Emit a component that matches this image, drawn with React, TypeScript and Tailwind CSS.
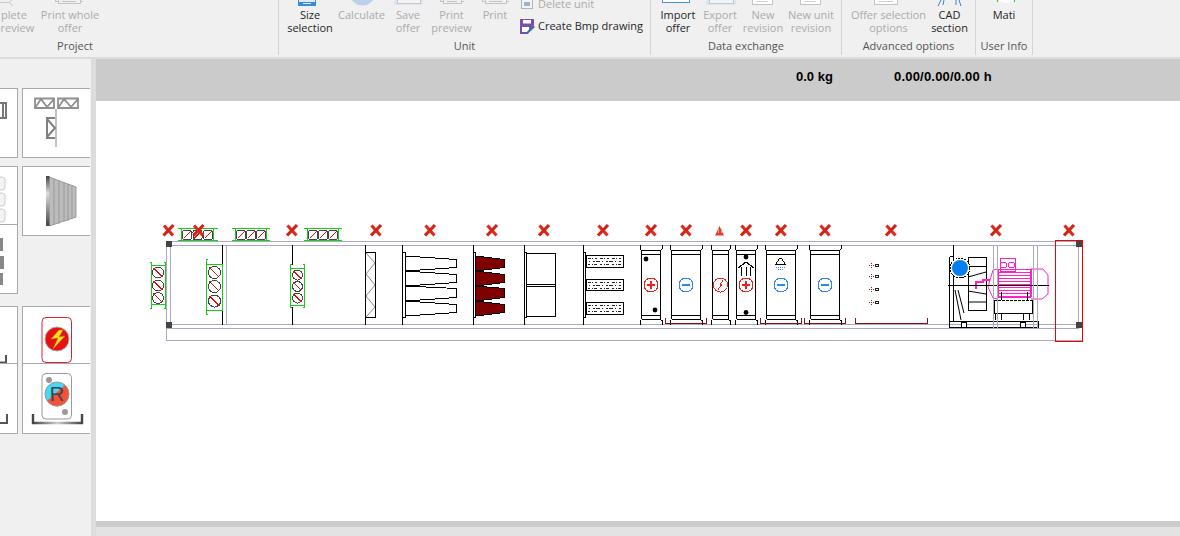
import React from "react";

function X({ x, y = 230.5 }: { x: number; y?: number }) {
  return (
    <g shapeRendering="auto">
      <path d={`M${x - 4.5} ${y - 5}L${x + 4.5} ${y + 5}`} stroke="#e22a1c" strokeWidth="3.2" />
      <path d={`M${x + 5} ${y - 5.5}L${x - 5} ${y + 5}`} stroke="#cf2418" strokeWidth="3.2" />
    </g>
  );
}

function SideDamper({ x, cys, r }: { x: number; cys: number[]; r: number }) {
  return (
    <g>
      {cys.map((cy) => (
        <g key={cy}>
          <circle cx={x} cy={cy} r={r} fill="#fff" stroke="#444" />
          <path d={`M${x - r + 1} ${cy - r + 1}L${x + r - 1} ${cy + r - 1}`} stroke="#e01010" />
        </g>
      ))}
    </g>
  );
}

function TopDamper({ l, r, vl, vr, cxs }: { l: number; r: number; vl: number; vr: number; cxs: number[] }) {
  return (
    <g>
      <path d={`M${l} 228.5H${r}M${l} 240.5H${r}M${vl}.5 228V241M${vr}.5 228V241`} fill="none" stroke="#18cc18" />
      {cxs.map((cx) => (
        <g key={cx}>
          <rect x={cx - 4.5} y="230.5" width="9" height="9" rx="2" fill="#fff" stroke="#444" />
          <path d={`M${cx - 3.5} 238.5L${cx + 3.5} 231.5`} stroke="#e01010" />
        </g>
      ))}
    </g>
  );
}

function Coil({ l, r, kind }: { l: number; r: number; kind: "plus" | "minus" | "flash" }) {
  const cx = (l + r) / 2;
  const color = kind === "minus" ? "#2f86f5" : "#ee2020";
  return (
    <g fill="none" stroke="#000">
      <path d={`M${l - 1.5} 245V249L${l} 250.5H${r}L${r + 1.5} 249V245`} />
      <path d={`M${l} 250V319M${r} 250V319M${l} 254.5H${r}M${l} 315.5H${r}M${l} 319.5H${r}`} />
      <path d={`M${l - 1.5} 325V320.5L${l} 319.5M${r + 1.5} 325V320.5L${r} 319.5`} />
      <circle cx={cx} cy={285} r="7" fill="#fff" stroke={color} />
      {kind !== "flash" && <path d={`M${cx - 4} 285H${cx + 4}`} stroke={color} strokeWidth="2" />}
      {kind === "plus" && <path d={`M${cx} 281V289`} stroke={color} strokeWidth="2" />}
      {kind === "flash" && <path d={`M${cx + 2.5} 280.5L${cx} 284H${cx + 1.5}L${cx - 2.5} 289.5`} stroke={color} />}
    </g>
  );
}

function Drain({ l, r }: { l: number; r: number }) {
  return <path d={`M${l}.5 318V323.5H${r}.5V318`} fill="none" stroke="#8b1010" />;
}

function Dots({ y }: { y: number }) {
  return (
    <g>
      <path d={`M869 ${y}.5H874M871.5 ${y - 2}V${y + 3}`} stroke="#8b2020" strokeDasharray="1 1" />
      <circle cx="877" cy={y + 0.5} r="1.5" fill="none" stroke="#222" />
    </g>
  );
}

function Carbon({ y, h }: { y: number; h: number }) {
  return (
    <g>
      <rect x="586.5" y={y + 0.5} width="37" height={h} fill="#fff" stroke="#000" />
      <path d={`M588 ${y + 3}.5H622`} stroke="#222" strokeDasharray="3 1 1 2 2 3" />
      <path d={`M589 ${y + 6}.5H622`} stroke="#222" strokeDasharray="1 3 2 1 4 2" />
      <path d={`M588 ${y + 9}.5H622`} stroke="#222" strokeDasharray="2 2 1 1 3 3" />
    </g>
  );
}

function Bolt({ x, y }: { x: number; y: number }) {
  return <circle cx={x} cy={y} r="2.4" fill="#000" shapeRendering="auto" />;
}

function Drawing() {
  const gl = "#a9a9c0";
  const xs = [168.5, 198.5, 292, 376, 430, 492, 544, 603, 651, 686, 746, 781, 825, 891, 996, 1069];
  return (
    <svg viewBox="96 101 1084 420" className="block h-[420px] w-[1084px]" shapeRendering="crispEdges">
      {/* casing */}
      <path d="M166 241.5H1079M170 245.5H1079M170 324.5H1079M166 328.5H1079M166 340.5H1082M166.5 241V341M170.5 245V325M1078.5 245V325" fill="none" stroke={gl} />

      {/* partitions */}
      <path d="M222.5 245V325M292.5 245V265M292.5 307V325" fill="none" stroke="#000" />
      <path d="M226.5 245V325" stroke={gl} />

      {/* side dampers */}
      <path d="M151.5 262V308.5M165.5 262V308.5M150 262.5H152M150 308.5H152M164 262.5H166M164 308.5H166M151 265.5H166M151 304.5H166" fill="none" stroke="#18cc18" />
      <SideDamper x={158} cys={[272.5, 285.5, 298]} r={5.5} />
      <path d="M206.5 259V314.5M222.5 264V310.5M206.5 264.5H222M206.5 310.5H222M206.5 259.5H208M206.5 314.5H208" fill="none" stroke="#18cc18" />
      <SideDamper x={214.5} cys={[272.5, 286.5, 301]} r={6} />
      <path d="M290.5 264V307.5M304.5 264V307.5M290.5 268.5H304M290.5 305.5H304M290.5 264.5H292M303 264.5H305M290.5 307.5H292M303 307.5H305" fill="none" stroke="#18cc18" />
      <SideDamper x={297.5} cys={[275, 286.5, 298]} r={5} />

      {/* top dampers */}
      <TopDamper l={178} r={218} vl={181} vr={213} cxs={[187, 197.5, 208]} />
      <TopDamper l={232} r={270} vl={235} vr={266} cxs={[241, 251, 261]} />
      <TopDamper l={304} r={342} vl={307} vr={338} cxs={[313, 323, 333]} />

      {/* panel filter */}
      <path d="M365.5 245V325M365.5 252.5H375.5V317.5H365.5" fill="none" stroke="#000" />
      <path d="M366 253L375 263L366 274L375 285L366 296L375 307L366 317" fill="none" stroke="#888" shapeRendering="auto" />

      {/* bag filter */}
      <path d="M402.5 245V325M402.5 252.5H405.5V317.5H402.5" fill="none" stroke="#000" />
      <g fill="#fff" stroke="#000">
        <path d="M405.5 256L456.5 259.5V267.5L405.5 271Z" />
        <path d="M405.5 271L456.5 274.5V282.5L405.5 286Z" />
        <path d="M405.5 286L456.5 288.5V297.5L405.5 301Z" />
        <path d="M405.5 301L456.5 304.5V312.5L405.5 316Z" />
      </g>
      <path d="M473.5 245V325M473.5 252.5H475.5V317.5H473.5" fill="none" stroke="#000" />
      <g fill="#7e0000" stroke="#000">
        <path d="M475.5 256L504.5 259.5V267.5L475.5 271Z" />
        <path d="M475.5 271L504.5 274.5V282.5L475.5 286Z" />
        <path d="M475.5 286L504.5 288.5V297.5L475.5 301Z" />
        <path d="M475.5 301L504.5 304.5V312.5L475.5 316Z" />
      </g>

      {/* compact filter */}
      <g fill="none" stroke="#000">
        <path d="M524.5 245V325M524.5 252.5H526.5V317.5H524.5" />
        <rect x="526.5" y="253.5" width="29" height="63" />
        <path d="M527 284.5H555M527 286.5H555" />
      </g>

      {/* carbon filter */}
      <path d="M583.5 245V325M583.5 252.5H585.5V317.5H583.5" fill="none" stroke="#000" />
      <Carbon y={255} h={12} />
      <Carbon y={279} h={11} />
      <Carbon y={302} h={12} />

      {/* coils */}
      <Coil l={641.5} r={660.5} kind="plus" />
      <Bolt x={646} y={259} />
      <Bolt x={655} y={310} />
      <Coil l={671.5} r={700.5} kind="minus" />
      <Drain l={665} r={706} />
      <Coil l={712.5} r={728.5} kind="flash" />
      <Coil l={736.5} r={755.5} kind="plus" />
      <Bolt x={746} y={257} />
      <Bolt x={746} y={312.5} />
      <path d="M738 268L746 262L754 268" fill="none" stroke="#000" strokeWidth="1.2" />
      <path d="M741.5 267V276M746.5 267V276M750.5 267V276" fill="none" stroke="#000" strokeWidth="1.4" />
      <Coil l={766.5} r={795.5} kind="minus" />
      <path d="M779.5 258.5H781.5L785.5 264.5H775.5Z" fill="#fff" stroke="#000" />
      <path d="M776 267.5H786" stroke="#2f86f5" strokeDasharray="1 1" />
      <path d="M778 269.5H784" stroke="#2f86f5" strokeDasharray="1 1" />
      <Drain l={760} r={801} />
      <Coil l={810.5} r={839.5} kind="minus" />
      <Drain l={804} r={845} />

      {/* eliminator */}
      <Dots y={265} />
      <Dots y={276} />
      <Dots y={289} />
      <Dots y={302} />
      <Drain l={855} r={927} />

      {/* fan */}
      <g fill="none" stroke="#000">
        <path d="M949.5 257V327.5H1038.5V321H949.5M949.5 256.5H953M953.5 245V321" />
        <rect x="968.5" y="257.5" width="18" height="53" fill="#fff" />
        <path d="M968 266.5H986M968 277L986 272M968 291L986 294M968 302L986 302M955 290L961 320M958 290L964 313" shapeRendering="auto" />
        <rect x="961.5" y="322.5" width="5" height="5" fill="#fff" />
        <rect x="1020.5" y="322.5" width="5" height="5" fill="#fff" />
      </g>
      <circle cx="960" cy="268" r="10" fill="#fff" stroke="#000" strokeDasharray="2 1" />
      <circle cx="960" cy="268" r="8" fill="#0a7df0" shapeRendering="auto" />

      {/* motor */}
      <g fill="none" stroke="#ff20c8">
        <path d="M1031 269H1043L1048 275V294L1042 299H1031" shapeRendering="auto" />
        <path d="M998 269L993 270L988 287L993 298L998 299" shapeRendering="auto" />
        <rect x="1000.5" y="258.5" width="15" height="13" />
        <circle cx="1003.5" cy="265" r="3" />
        <circle cx="1011.5" cy="265" r="3" />
        <path d="M998 272.5H1031M998 275.5H1031M998 278.5H1031M998 281.5H1031M998 284.5H1031M998 287.5H1031M998 290.5H1031M998 293.5H1031" />
        <path d="M1031 269V297M998 296.5H1031" strokeWidth="2" />
        <path d="M976 289V282H983V279.5H990" strokeWidth="2" />
        <path d="M998 269H1031M998 269V296" />
      </g>
      <g fill="none" stroke="#000">
        <path d="M948 285.5H1049" />
        <path d="M994 300.5H1032.5" strokeDasharray="3 1" />
        <path d="M994.5 300V313.5H1032.5V300M1001.5 292V300M1027.5 292V300" />
        <path d="M995.5 313V320M1001.5 313V320M1023.5 313V320M1029.5 313V320" />
      </g>
      <path d="M993.5 245V328M997.5 245V328M1033.5 245V328M1037.5 245V328" stroke={gl} fill="none" />

      {/* markers */}
      {xs.map((x) => (
        <X key={x} x={x} />
      ))}
      <path d="M719.5 226L724 235.5H715Z" fill="#e83a2a" shapeRendering="auto" />
      <path d="M718 233V229M721 233V229" stroke="#f8a090" />
      <rect x="166" y="241" width="6" height="6" fill="#444" />
      <rect x="166" y="322" width="6" height="6" fill="#444" />
      <rect x="1076" y="241" width="6" height="6" fill="#444" />
      <rect x="1076" y="322" width="6" height="6" fill="#444" />
      <rect x="1055.5" y="240.5" width="27" height="101" fill="none" stroke="#f00000" />
    </svg>
  );
}

function Btn({ cls, a, b, on = false, icon }: { cls: string; a: string; b?: string; on?: boolean; icon?: React.ReactNode }) {
  return (
    <div className={`relative flex shrink-0 flex-col items-center pt-[8px] text-[11px] leading-[13px] whitespace-nowrap ${on ? "text-[#262626]" : "text-[#ababab]"} ${cls}`}>
      {icon}
      <span>{a}</span>
      <span>{b}</span>
    </div>
  );
}

function Group({ cls, label, children }: { cls: string; label: string; children: React.ReactNode }) {
  return (
    <div className={`flex h-[55px] shrink-0 flex-col border-r border-[#d4d4d4] ${cls}`}>
      <div className="flex h-[38px]">{children}</div>
      <div className="text-center text-[11px] leading-[16px] text-[#555]">{label}</div>
    </div>
  );
}

function Tile({ cls, children }: { cls: string; children?: React.ReactNode }) {
  return <div className={`w-[68px] shrink-0 overflow-hidden border border-[#a9a9a9] bg-white ${cls}`}>{children}</div>;
}

const PaperIcon = ({ left, w }: { left: string; w: number }) => (
  <svg width={w} height="6" viewBox={`0 0 ${w} 6`} className={`absolute top-0 ${left}`} shapeRendering="crispEdges">
    <path d={`M3.5 0V3.5H${w - 3}V0M0 0V1.5H3M${w - 3} 1.5H${w}V0M7 1.5H${w - 7}`} fill="none" stroke="#c4c4c4" />
  </svg>
);

const PagedIcon = ({ left, w }: { left: string; w: number }) => (
  <svg width={w} height="5" viewBox={`0 0 ${w} 5`} className={`absolute top-0 ${left}`} shapeRendering="crispEdges">
    <path d={`M0.5 0V4.5H${w - 0.5}V0`} fill="#fff" stroke="#c4c4c4" />
    <path d={`M5 1.5H${w - 5}`} stroke="#cfcfcf" />
  </svg>
);

const PaleIcon = ({ left, w }: { left: string; w: number }) => (
  <svg width={w} height="6" viewBox={`0 0 ${w} 6`} className={`absolute top-0 ${left}`} shapeRendering="crispEdges">
    <rect x="0" y="-2" width={w} height="7" fill="#dbe6f4" />
    <rect x="3" y="-2" width={w - 6} height="5" fill="#f3f3f3" stroke="#c8c8c8" />
  </svg>
);

export default function App() {
  return (
    <div className="flex h-[536px] w-[1180px] flex-col overflow-hidden bg-[#f0f0f0] font-['Open_Sans','Noto_Sans',sans-serif]">
      {/* ribbon */}
      <div className="flex h-[59px] shrink-0 overflow-hidden border-b-2 border-[#dcdcdc] bg-[#f0f0f0]">
        <div className="flex h-[55px] w-[279px] shrink-0 flex-col overflow-hidden border-r border-[#d4d4d4]">
          <div className="relative flex h-[38px]">
            <div className="absolute left-[-22px]">
              <Btn
                cls="w-[72px]"
                a="plete"
                b="preview"
                icon={
                  <svg width="13" height="6" viewBox="0 0 13 6" className="absolute left-[22px] top-0" shapeRendering="auto">
                    <path d="M0 2.5H9L12 0M9 2.5L13 6" fill="none" stroke="#c8c8c8" />
                  </svg>
                }
              />
            </div>
            <div className="ml-[36px]">
              <Btn cls="w-[68px]" a="Print whole" b="offer" icon={<PaperIcon left="left-[19px]" w={28} />} />
            </div>
          </div>
          <div className="w-[150px] text-center text-[11px] leading-[16px] text-[#555]">Project</div>
        </div>

        <Group cls="w-[372px]" label="Unit">
          <div className="flex w-[241px] pl-[3px]">
            <Btn
              cls="w-[56px]"
              a="Size"
              b="selection"
              on
              icon={
                <svg width="18" height="6" viewBox="0 0 18 6" className="absolute left-[16px] top-0" shapeRendering="crispEdges">
                  <rect x="0" y="0" width="18" height="6" fill="#3f8ad6" />
                  <rect x="1" y="0" width="16" height="2" fill="#dcebf8" />
                  <path d="M5 3.5H13" stroke="#dcebf8" />
                </svg>
              }
            />
            <Btn
              cls="w-[47px]"
              a="Calculate"
              icon={
                <svg width="27" height="6" viewBox="0 0 27 6" className="absolute left-[11px] top-0">
                  <ellipse cx="13.5" cy="-9" rx="13.5" ry="14.5" fill="#bcd0ec" />
                </svg>
              }
            />
            <Btn cls="w-[46px]" a="Save" b="offer" icon={<PaleIcon left="left-[9px]" w={29} />} />
            <Btn cls="w-[41px]" a="Print" b="preview" icon={<PaperIcon left="left-[9px]" w={24} />} />
            <Btn cls="w-[46px]" a="Print" icon={<PaperIcon left="left-[10px]" w={27} />} />
          </div>
          <div className="flex flex-col text-[11px] leading-[16px] whitespace-nowrap">
            <div className="-mt-[4px] flex h-[16px] items-center text-[#ababab]">
              <svg width="12" height="12" viewBox="0 0 12 12" className="ml-[1px] mr-[5px] -mt-[3px]" shapeRendering="crispEdges">
                <rect x="0.5" y="-2" width="11" height="13.5" fill="#f4f4f4" stroke="#b4b4b4" />
                <rect x="3" y="5" width="6" height="4" fill="#9fb2c8" />
              </svg>
              Delete unit
            </div>
            <div className="mt-[6px] flex h-[16px] items-center text-[#262626]">
              <svg width="15" height="15" viewBox="0 0 15 15" className="mr-[3px]">
                <path d="M0 0H14V6L11 9L8 15H0Z" fill="#7b4ea8" />
                <rect x="3" y="1" width="8" height="3.5" fill="#fff" />
                <rect x="2" y="8" width="7" height="5" fill="#fff" />
                <path d="M5 15L13 6L15 8L7.5 15Z" fill="#3b6db0" />
              </svg>
              Create Bmp drawing
            </div>
          </div>
        </Group>

        <Group cls="w-[191px]" label="Data exchange">
          <Btn
            cls="w-[54px]"
            a="Import"
            b="offer"
            on
            icon={
              <svg width="28" height="4" viewBox="0 0 28 4" className="absolute left-[11px] top-0" shapeRendering="crispEdges">
                <path d="M0.5 0V2.5H27.5V0" fill="#fff" stroke="#4a8fdc" />
              </svg>
            }
          />
          <Btn cls="w-[30px]" a="Export" b="offer" icon={<PaleIcon left="left-[1px]" w={30} />} />
          <Btn cls="w-[56px]" a="New" b="revision" icon={<PagedIcon left="left-[17px]" w={21} />} />
          <Btn cls="w-[40px]" a="New unit" b="revision" icon={<PagedIcon left="left-[9px]" w={21} />} />
        </Group>

        <Group cls="w-[134px]" label="Advanced options">
          <Btn cls="w-[93px]" a="Offer selection" b="options" icon={<PagedIcon left="left-[32px]" w={24} />} />
          <Btn
            cls="w-[29px]"
            a="CAD"
            b="section"
            on
            icon={
              <svg width="25" height="6" viewBox="0 0 25 6" className="absolute left-[2px] top-0">
                <path d="M4 0L1 6M7 0L6 5M19 0L19 5M22 0L24 6" fill="none" stroke="#3f7fc8" />
              </svg>
            }
          />
        </Group>

        <Group cls="w-[57px]" label="User Info">
          <Btn
            cls="w-[56px]"
            a="Mati"
            on
            icon={
              <svg width="18" height="3" viewBox="0 0 18 3" className="absolute left-[21px] top-0">
                <ellipse cx="9" cy="-1" rx="7" ry="4" fill="#fff" />
                <rect x="0" y="0" width="1" height="2" fill="#22cc22" />
                <rect x="17" y="0" width="1" height="2" fill="#22cc22" />
              </svg>
            }
          />
        </Group>
      </div>

      <div className="flex min-h-0 flex-1">
        {/* left palette */}
        <div className="flex w-[96px] shrink-0">
          <div className="w-[91px] overflow-hidden bg-[#f0f0f0] pt-[29px]">
            <div className="flex">
              <div className="ml-[-50px] flex flex-col">
                <Tile cls="mb-[8px] h-[70px]">
                  <svg viewBox="-49 89 66 68" className="block h-[68px] w-[66px]">
                    <path d="M0 103H6V118H0M3 103V118" fill="none" stroke="#777" strokeWidth="2" />
                  </svg>
                </Tile>
                <Tile cls="h-[59px]">
                  <svg viewBox="-49 167 66 57" className="block h-[57px] w-[66px]">
                    <rect x="-6" y="177" width="11" height="13" rx="3" fill="#f3f3f3" stroke="#ccc" />
                    <rect x="-6" y="193" width="11" height="13" rx="3" fill="#f3f3f3" stroke="#ccc" />
                    <rect x="-6" y="209" width="11" height="13" rx="3" fill="#f3f3f3" stroke="#ccc" />
                  </svg>
                </Tile>
                <Tile cls="mb-[12px] h-[69px] border-t-0">
                  <svg viewBox="-49 224 66 68" className="block h-[68px] w-[66px]">
                    <path d="M-4 237H3V250H-4ZM-4 255H4V268H-4ZM-4 272H3V284H-4Z" fill="#888" />
                  </svg>
                </Tile>
                <Tile cls="h-[58px]">
                  <svg viewBox="-49 306 66 57" className="block h-[57px] w-[66px]">
                    <path d="M6 354V362M-6 361.5H7" fill="none" stroke="#555" strokeWidth="2" />
                  </svg>
                </Tile>
                <Tile cls="h-[70px] border-t-0">
                  <svg viewBox="-49 363 66 69" className="block h-[69px] w-[66px]">
                    <path d="M7 413V422H-6" fill="none" stroke="#555" strokeWidth="2" />
                  </svg>
                </Tile>
              </div>
              <div className="ml-[4px] flex flex-col">
                <Tile cls="mb-[8px] h-[70px] border-r-0">
                  <svg viewBox="23 89 67 68" className="block h-[68px] w-[67px]">
                    <defs>
                      <linearGradient id="g1" x1="0" x2="1">
                        <stop offset="0" stopColor="#777" />
                        <stop offset="0.5" stopColor="#ddd" />
                        <stop offset="1" stopColor="#777" />
                      </linearGradient>
                    </defs>
                    <path d="M35 98.5H54V108H35ZM58 98.5H78V108H58ZM35 108L41 99L47 107L54 99M58 108L64 99L71 107L78 99" fill="none" stroke="#8f8f8f" strokeWidth="1.8" />
                    <path d="M32 109H81" stroke="url(#g1)" strokeWidth="2" />
                    <path d="M56 109V147" stroke="#999" strokeWidth="1.2" />
                    <path d="M47 118H55M47 138H55M47 117V139M47 119L55 128L47 137" fill="none" stroke="#808080" strokeWidth="2" />
                  </svg>
                </Tile>
                <Tile cls="mb-[70px] h-[70px] border-r-0">
                  <svg viewBox="23 167 67 68" className="block h-[68px] w-[67px]">
                    <defs>
                      <linearGradient id="g2" x1="0" x2="0" y1="0" y2="1">
                        <stop offset="0" stopColor="#444" />
                        <stop offset="0.35" stopColor="#ddd" />
                        <stop offset="1" stopColor="#444" />
                      </linearGradient>
                    </defs>
                    <path d="M49 177L76 187V217L49 226Z" fill="#bcbcbc" stroke="#999" />
                    <path d="M54 178V225M59 180V224M64 182V222M68 184V221M72 185V219" stroke="#999" />
                    <rect x="46" y="176" width="3.5" height="50" fill="url(#g2)" />
                  </svg>
                </Tile>
                <Tile cls="h-[58px] border-r-0">
                  <svg viewBox="23 306 67 56" className="block h-[56px] w-[67px]">
                    <rect x="42" y="316.5" width="29.5" height="45" rx="4" fill="#fff" stroke="#e0202c" />
                    <circle cx="57" cy="338" r="12" fill="#e81010" stroke="#aaa" />
                    <path d="M59 329L51 338L58 337L53 348L65 335L59 336L63 329Z" fill="#f4e01c" stroke="#a89010" strokeWidth="0.5" />
                  </svg>
                </Tile>
                <Tile cls="h-[70px] border-t-0 border-r-0">
                  <svg viewBox="23 363 67 69" className="block h-[69px] w-[67px]">
                    <defs>
                      <linearGradient id="g3" x1="0" x2="1">
                        <stop offset="0" stopColor="#444" />
                        <stop offset="0.5" stopColor="#ccc" />
                        <stop offset="1" stopColor="#444" />
                      </linearGradient>
                    </defs>
                    <path d="M33 413V422H82V413" fill="none" stroke="url(#g3)" strokeWidth="2.4" />
                    <rect x="42" y="372.5" width="29.5" height="45.5" rx="4" fill="#fff" stroke="#999" />
                    <circle cx="57" cy="393" r="12" fill="#45d8f8" />
                    <path d="M69 393A12 12 0 0 1 47 400L65 384A12 12 0 0 1 69 393Z" fill="#f4503a" />
                    <circle cx="57" cy="393" r="12" fill="none" stroke="#999" />
                    <text x="57" y="400" textAnchor="middle" fontSize="20" fill="#444" fontFamily="Liberation Sans">R</text>
                    <circle cx="49" cy="379" r="3" fill="#999" />
                    <circle cx="65" cy="411" r="3" fill="#999" />
                  </svg>
                </Tile>
              </div>
            </div>
          </div>
          <div className="w-[5px] bg-[#dcdcdc]" />
        </div>

        {/* main */}
        <div className="flex min-w-0 flex-1 flex-col">
          <div className="flex h-[42px] shrink-0 items-center bg-[#cbcbcb] pb-[6px] font-['Liberation_Sans',sans-serif] text-[13px] font-bold text-black">
            <span className="ml-[700px] w-[98px]">0.0 kg</span>
            <span className="tracking-[0.2px]">0.00/0.00/0.00 h</span>
          </div>
          <div className="h-[420px] shrink-0 overflow-hidden bg-white">
            <Drawing />
          </div>
          <div className="h-[6px] shrink-0 bg-[#cbcbcb]" />
          <div className="flex-1 bg-[#e3e3e3]" />
        </div>
      </div>
    </div>
  );
}
